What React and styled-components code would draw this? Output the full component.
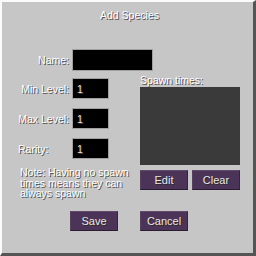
import React from "react";
import styled, { createGlobalStyle } from "styled-components";

const Global = createGlobalStyle`
  html, body { margin: 0; padding: 0; background: #ffffff; }
  #root { width: 256px; height: 256px; }
`;

const Panel = styled.div`
  box-sizing: border-box;
  width: 256px;
  height: 256px;
  background: #c6c6c6;
  border-top: 2px solid #fbfbfb;
  border-left: 2px solid #fbfbfb;
  border-right: 3px solid #555555;
  border-bottom: 3px solid #555555;
  display: flex;
  flex-direction: column;
  font-family: "Liberation Sans", Arial, sans-serif;
  color: #ffffff;
`;

const Text = styled.div`
  font-size: 10.5px;
  line-height: 10px;
  color: #ffffff;
  text-shadow: 1px 1px 0 #505050;
  white-space: nowrap;
`;

const Title = styled(Text)`
  text-align: center;
  margin-top: 8px;
  padding-left: 4px;
`;

const FieldRow = styled.div`
  display: grid;
  grid-template-columns: 53px ${(p) => p.$w}px;
  column-gap: 3px;
  align-items: center;
  margin-left: 14px;
  margin-top: ${(p) => p.$mt || 0}px;
`;

const Label = styled(Text)`
  justify-self: ${(p) => (p.$start ? "start" : "end")};
  padding-left: ${(p) => (p.$start ? 2 : 0)}px;
`;

const Input = styled.div`
  box-sizing: border-box;
  height: ${(p) => p.$h || 21}px;
  background: #000000;
  border: 1px solid #a0a0a0;
  color: #e6e6e6;
  font-size: 10.5px;
  line-height: 10px;
  padding: 5px 0 0 4px;
  text-shadow: 1px 1px 0 #3f3f3f;
`;

const Middle = styled.div`
  display: flex;
  margin-top: 4px;
`;

const LeftCol = styled.div`
  width: 124px;
  display: flex;
  flex-direction: column;
`;

const Rows = styled.div`
  display: flex;
  flex-direction: column;
  gap: 9px;
  margin-top: 3px;
`;

const Note = styled(Text)`
  white-space: normal;
  margin-left: 18px;
  margin-top: 8px;
  line-height: 10.5px;
  width: 118px;
`;

const RightCol = styled.div`
  width: 100px;
  margin-left: 14px;
  display: flex;
  flex-direction: column;
`;

const SpawnBox = styled.div`
  height: 78px;
  background: #3a3a3a;
  margin-top: 2px;
`;

const ButtonPair = styled.div`
  display: flex;
  gap: 4px;
  margin-top: 5px;
`;

const Button = styled.div`
  box-sizing: border-box;
  width: 48px;
  height: 20px;
  background: #4b3457;
  border-top: 1px solid #624a6c;
  border-left: 1px solid #584062;
  border-bottom: 1px solid #2b1d31;
  border-right: 1px solid #35243c;
  display: flex;
  align-items: center;
  justify-content: center;
  color: #e8e8e8;
  font-size: 11px;
  text-shadow: 1px 1px 0 #2a2a2a;
`;

const BottomRow = styled.div`
  display: flex;
  gap: 22px;
  margin-left: 68px;
  margin-top: auto;
  margin-bottom: 22px;
`;

export default function App() {
  return (
    <>
      <Global />
      <Panel>
        <Title>Add Species</Title>
        <FieldRow $w={81} $mt={29}>
          <Label>Name:</Label>
          <Input $h={22} />
        </FieldRow>
        <Middle>
          <LeftCol>
            <Rows>
              <FieldRow $w={37}>
                <Label>Min Level:</Label>
                <Input>1</Input>
              </FieldRow>
              <FieldRow $w={37}>
                <Label>Max Level:</Label>
                <Input>1</Input>
              </FieldRow>
              <FieldRow $w={37}>
                <Label $start>Rarity:</Label>
                <Input>1</Input>
              </FieldRow>
            </Rows>
            <Note>Note: Having no spawn times means they can always spawn</Note>
          </LeftCol>
          <RightCol>
            <Text>Spawn times:</Text>
            <SpawnBox />
            <ButtonPair>
              <Button>Edit</Button>
              <Button>Clear</Button>
            </ButtonPair>
          </RightCol>
        </Middle>
        <BottomRow>
          <Button>Save</Button>
          <Button>Cancel</Button>
        </BottomRow>
      </Panel>
    </>
  );
}
